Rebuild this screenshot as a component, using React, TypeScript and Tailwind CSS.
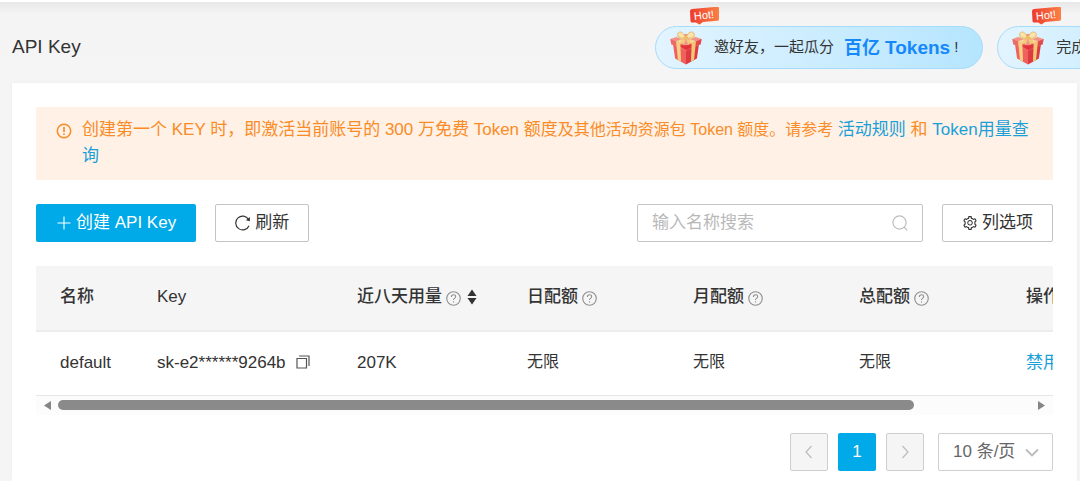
import React from "react";
import { AiOutlineSetting } from "react-icons/ai";

function GiftIcon() {
  return (
    <svg viewBox="0 0 36 38" className="h-9 w-9 shrink-0" aria-hidden="true">
      <path d="M4 13 18 20v16.500L6.500 30z" fill="#f0605c" />
      <path d="M32 13 18 20v16.500L29.500 30z" fill="#dd3a42" />
      <path d="M1.500 9.500 18 4l16.500 5.500-1 5.500L18 22 2.500 15z" fill="#f29388" />
      <path d="m1.500 9.500 16.500 7V22L2.500 15z" fill="#ee6b64" />
      <path d="M34.500 9.500 18 16.500V22l15.500-7z" fill="#e24a4e" />
      <path d="m10 16 18.500 0-10.500 5z" fill="#e2333c" />
      <path d="m7.500 12 4.500 2 .8 19.500-3.300-1.800z" fill="#f4cf85" />
      <path d="m28.500 12-4.500 2-.8 19.500 3.300-1.800z" fill="#f0c774" />
      <path d="m7.500 12 17-6 4 1.500-16.500 6.500zM28.500 12l-17-6-4 1.500L24 14z" fill="#f7d998" />
      <path d="M17.500 8.500C11 9.500 7.500 6 10 2.800c2.500-2.200 6.500 1 7.500 5.700z" fill="#f9e4ae" stroke="#dcae58" strokeWidth=".8" />
      <path d="M18 8.500C25 9.500 28.500 6 26 2.800c-3-2.200-7 1-8 5.700z" fill="#f9e4ae" stroke="#dcae58" strokeWidth=".8" />
      <path d="M17.500 9c-4 1-5.500 3-6 6l3-1 1.500 2c.2-3 1-5 1.500-7zM18 9c4 1 6 3 6.500 5.500l-3-.5-1.500 2c-.2-3-1-5-2-7z" fill="#f3cb7a" />
      <ellipse cx="17.800" cy="8" rx="2.400" ry="2" fill="#edbd62" />
    </svg>
  );
}

function HotBadge() {
  return (
    <span className="absolute -top-5 left-8 h-5 w-8" aria-hidden="true">
      <svg viewBox="0 0 32 20" className="absolute inset-0 h-full w-full">
        <defs>
          <linearGradient id="hot" x1="0" x2="1">
            <stop offset="0" stopColor="#ee3a2d" />
            <stop offset="1" stopColor="#fa8145" />
          </linearGradient>
        </defs>
        <path d="M4 2 29.500 -0.300q1.500 0 1.500 1.500v11q0 1.500-1.500 1.500L15 15 11.500 17.500 8 15.500 4 15.500q-1.300 0-1.500-1.500L2 4q0-1.700 2-2z" fill="url(#hot)" />
      </svg>
      <span className="absolute inset-x-0 top-0.5 -rotate-6 text-center text-[11px] leading-[13px] text-white">Hot!</span>
    </span>
  );
}

function Promo({ children }: { children: React.ReactNode }) {
  return (
    <a
      href="#promo"
      className="relative flex h-[43px] shrink-0 items-center rounded-full border border-[#a5dbfb] bg-linear-to-r from-[#e2f4ff] to-[#b5e5ff] pr-5 pl-3 text-[15px] whitespace-nowrap text-[#333]"
    >
      <HotBadge />
      <GiftIcon />
      <span className="ml-2.5 flex items-center">{children}</span>
    </a>
  );
}

function Help() {
  return (
    <svg viewBox="0 0 16 16" className="mt-0.5 h-[15px] w-[15px]" fill="none" stroke="#8f8f8f" aria-hidden="true">
      <circle cx="8" cy="8" r="7.200" strokeWidth="1.200" />
      <path d="M5.700 6.300C5.700 4.900 6.700 4.100 8 4.100s2.300.8 2.300 2.100c0 1.600-2.300 1.700-2.300 3.200v.3M8 11v1.300" strokeWidth="1.100" />
    </svg>
  );
}

function Chevron({ path }: { path: string }) {
  return (
    <svg viewBox="0 0 14 14" className="h-3.5 w-3.5" fill="none" stroke="currentColor" strokeWidth="1.200" aria-hidden="true">
      <path d={path} />
    </svg>
  );
}

const columns = [
  { title: "名称" },
  { title: "Key" },
  { title: "近八天用量", help: true, sort: true },
  { title: "日配额", help: true },
  { title: "月配额", help: true },
  { title: "总配额", help: true },
  { title: "操作" },
];

export default function App() {
  return (
    <div className="min-h-screen overflow-hidden border-t-2 border-white bg-[#f5f5f5] font-['Liberation_Sans','Noto_Sans_CJK_SC',sans-serif] text-[#333]">
      <header className="flex justify-between bg-linear-to-b from-[#e8e8e8] via-[#f4f4f4] via-15% to-[#f5f5f5] pl-3">
        <h1 className="pt-[33px] text-[19px] leading-6">API Key</h1>
        <div className="flex w-[425px] gap-3.5 overflow-hidden pt-6 pb-3.5">
          <Promo>
            邀好友，一起瓜分
            <strong className="ml-2.5 text-[18px] leading-6 font-bold text-[#1688fa]">
              百亿 <span className="text-[19px]">Tokens</span>
            </strong>
            <span className="mx-1">!</span>
          </Promo>
          <Promo>完成实名认证，领取福利</Promo>
        </div>
      </header>

      <main className="mr-[3px] ml-3 min-h-[398px] bg-white p-6 pb-2.5 shadow-[0_0_4px_rgba(0,0,0,0.04)]">
        <div className="flex gap-2.5 bg-[#fff1e5] pt-2.5 pr-5 pb-[11px] pl-5 text-[#fa8c28]">
          <svg viewBox="0 0 16 16" className="mt-1.5 h-4 w-4 shrink-0" fill="none" stroke="currentColor" strokeWidth="1.500" aria-hidden="true">
            <circle cx="8" cy="8" r="6.700" />
            <path d="M8 4v5M8 10.500V12" strokeWidth="1.700" />
          </svg>
          <p className="text-[17px] leading-[26px]">
            创建第一个 KEY 时，即激活当前账号的 300 万免费 Token 额度
            <span className="text-base leading-[26px]">及其他活动资源包 Token 额度。请参考 </span>
            <a href="#rules" className="text-[#1a9fd9]">活动规则</a> 和{" "}
            <a href="#usage" className="text-[#1a9fd9]">Token用量查询</a>
          </p>
        </div>

        <div className="mt-6 flex justify-between text-[17px]">
          <div className="flex gap-[19px]">
            <button type="button" className="flex h-[38px] items-center gap-1 rounded-xs bg-[#00a9e8] px-5 text-white">
              <svg viewBox="0 0 16 16" className="h-4 w-4" stroke="currentColor" strokeWidth="1.100" aria-hidden="true">
                <path d="M8 1.500v13M1.500 8h13" />
              </svg>
              创建 API Key
            </button>
            <button type="button" className="flex h-[38px] items-center gap-1 rounded-xs border border-[#c4c4c4] bg-white px-[19px]">
              <svg viewBox="0 0 16 16" className="h-4 w-4" fill="none" stroke="currentColor" strokeWidth="1.200" aria-hidden="true">
                <path d="M14 10.700A6.900 6.900 0 1 1 13.600 4.500" />
                <path d="M14.900 2v4.200l-4-.9z" fill="currentColor" stroke="none" />
              </svg>
              刷新
            </button>
          </div>
          <div className="flex gap-[19px]">
            <label className="flex h-[38px] w-[286px] items-center rounded-xs border border-[#c4c4c4] bg-white px-3.5">
              <input type="text" aria-label="搜索" placeholder="输入名称搜索" className="min-w-0 flex-1 outline-none placeholder:text-[#b9b9b9]" />
              <svg viewBox="0 0 16 16" className="h-4 w-4 text-[#bdbdbd]" fill="none" stroke="currentColor" strokeWidth="1.200" aria-hidden="true">
                <circle cx="7.500" cy="7.500" r="6.600" />
                <path d="m12 12 3.300 3.300" />
              </svg>
            </label>
            <button type="button" className="flex h-[38px] items-center gap-1 rounded-xs border border-[#c4c4c4] bg-white px-[19px]">
              <AiOutlineSetting className="h-4 w-4" aria-hidden="true" />
              列选项
            </button>
          </div>
        </div>

        <div className="mt-6 overflow-hidden">
          <table className="w-[1156px] table-fixed text-left text-[17px]">
            <colgroup>
              <col className="w-[97px]" />
              <col className="w-[200px]" />
              <col className="w-[170px]" />
              <col className="w-[166px]" />
              <col className="w-[166px]" />
              <col className="w-[167px]" />
              <col />
            </colgroup>
            <thead>
              <tr className="h-[65px] border-b-2 border-[#ececec] bg-[#f5f5f5]">
                {columns.map((column) => (
                  <th key={column.title} className="pb-0.5 pl-6 font-medium whitespace-nowrap">
                    <span className="flex items-center gap-1">
                      {column.title}
                      {column.help && <Help />}
                      {column.sort && (
                        <svg viewBox="0 0 10 16" className="ml-0.5 h-4 w-2.5" fill="#333" aria-hidden="true">
                          <path d="M5 .5 9.500 7h-9zM5 15.500 9.500 9h-9z" />
                        </svg>
                      )}
                    </span>
                  </th>
                ))}
              </tr>
            </thead>
            <tbody>
              <tr className="h-16 border-b border-[#e6e6e6] *:pb-0.5">
                <td className="pl-6">default</td>
                <td className="pl-6">
                  <span className="flex items-center gap-2.5">
                    sk-e2******9264b
                    <button type="button" aria-label="复制">
                      <svg viewBox="0 0 14 14" className="h-3.5 w-3.5" fill="none" stroke="#555" strokeWidth="1.200" aria-hidden="true">
                        <path d="M1 3.500h9.500V13H1zM3 1h10v10" />
                      </svg>
                    </button>
                  </span>
                </td>
                <td className="pl-6">207K</td>
                <td className="pl-6 text-base">无限</td>
                <td className="pl-6 text-base">无限</td>
                <td className="pl-6 text-base">无限</td>
                <td className="pl-6"><a href="#disable" className="text-[#1a9fd9]">禁用</a></td>
              </tr>
            </tbody>
          </table>
        </div>

        <div className="flex h-[19px] items-center justify-between bg-[#fcfcfc] px-2 text-[#858585]">
          <svg viewBox="0 0 7 9" className="h-[9px] w-[7px]" fill="currentColor" aria-hidden="true"><path d="M7 0v9L0 4.500z" /></svg>
          <div className="mx-[7px] flex-1">
            <div className="h-2.5 w-[88%] rounded-full bg-[#8a8a8a]" />
          </div>
          <svg viewBox="0 0 7 9" className="h-[9px] w-[7px]" fill="currentColor" aria-hidden="true"><path d="M0 0v9l7-4.500z" /></svg>
        </div>

        <nav aria-label="分页" className="mt-[18px] flex justify-end gap-2.5 text-[17px]">
          <button type="button" disabled aria-label="上一页" className="flex h-[38px] w-[38px] items-center justify-center rounded-xs border border-[#cfcfcf] bg-[#f5f5f5] text-[#bbb]">
            <Chevron path="M9.500 1 4 7l5.500 6" />
          </button>
          <button type="button" className="h-[38px] w-[38px] rounded-xs bg-[#00a9e8] font-medium text-white">1</button>
          <button type="button" disabled aria-label="下一页" className="flex h-[38px] w-[38px] items-center justify-center rounded-xs border border-[#cfcfcf] bg-[#f5f5f5] text-[#bbb]">
            <Chevron path="M4.500 1 10 7l-5.500 6" />
          </button>
          <div className="relative ml-1">
            <select aria-label="每页条数" className="h-[38px] w-[115px] appearance-none rounded-xs border border-[#cfcfcf] bg-white pl-3.5 text-[#666]">
              <option>10 条/页</option>
            </select>
            <svg viewBox="0 0 14 14" className="pointer-events-none absolute top-3 right-3.5 h-3.5 w-3.5" fill="none" stroke="#bbb" strokeWidth="1.800" aria-hidden="true">
              <path d="m1 4.500 6 6 6-6" />
            </svg>
          </div>
        </nav>
      </main>
    </div>
  );
}
